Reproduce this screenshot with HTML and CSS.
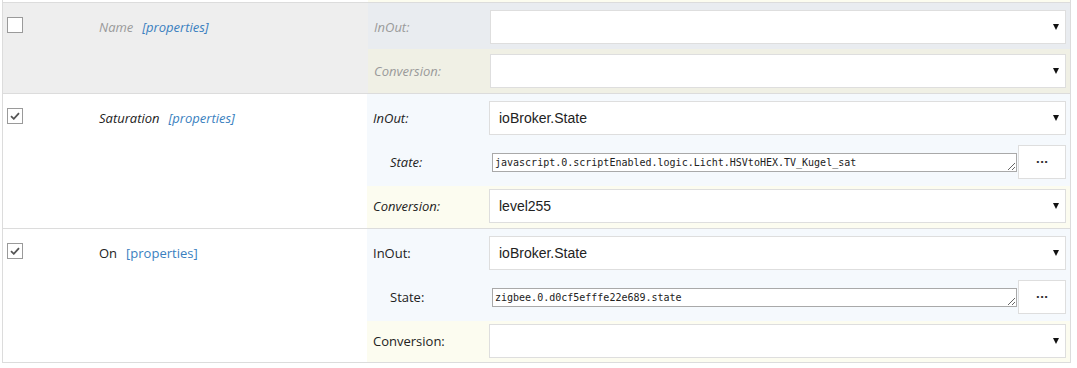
FILE: index.html
```html
<!DOCTYPE html>
<html>
<head>
<meta charset="utf-8">
<link rel="stylesheet" href="styles.css">
</head>
<body>
<div class="list">
  <div class="strip"><div class="strip-l"></div><div class="strip-r"></div></div>

  <div class="row row-off">
    <div class="left">
      <span class="chk"></span>
      <span class="name it">Name</span>
      <span class="props it">[properties]</span>
    </div>
    <div class="right">
      <div class="sub io"><div class="lab it">InOut:</div><div class="ctl"><div class="sel"><span class="val"></span><span class="arr"></span></div></div></div>
      <div class="sub conv conv-first"><div class="lab it">Conversion:</div><div class="ctl"><div class="sel"><span class="val"></span><span class="arr"></span></div></div></div>
    </div>
  </div>

  <div class="row">
    <div class="left">
      <span class="chk"><svg width="10" height="8" viewBox="0 0 10 8"><path d="M1 4.2 L3.8 6.8 L9 1.2" fill="none" stroke="#555" stroke-width="1.8"/></svg></span>
      <span class="name it">Saturation</span>
      <span class="props it">[properties]</span>
    </div>
    <div class="right">
      <div class="sub io"><div class="lab it">InOut:</div><div class="ctl"><div class="sel"><span class="val">ioBroker.State</span><span class="arr"></span></div></div></div>
      <div class="sub st"><div class="lab lab-st it">State:</div><div class="ctl ctl-st"><textarea class="ta" rows="1">javascript.0.scriptEnabled.logic.Licht.HSVtoHEX.TV_Kugel_sat</textarea><button class="btn">···</button></div></div>
      <div class="sub conv"><div class="lab it">Conversion:</div><div class="ctl"><div class="sel"><span class="val">level255</span><span class="arr"></span></div></div></div>
    </div>
  </div>

  <div class="row">
    <div class="left">
      <span class="chk"><svg width="10" height="8" viewBox="0 0 10 8"><path d="M1 4.2 L3.8 6.8 L9 1.2" fill="none" stroke="#555" stroke-width="1.8"/></svg></span>
      <span class="name">On</span>
      <span class="props">[properties]</span>
    </div>
    <div class="right">
      <div class="sub io"><div class="lab">InOut:</div><div class="ctl"><div class="sel"><span class="val">ioBroker.State</span><span class="arr"></span></div></div></div>
      <div class="sub st"><div class="lab lab-st">State:</div><div class="ctl ctl-st"><textarea class="ta" rows="1">zigbee.0.d0cf5efffe22e689.state</textarea><button class="btn">···</button></div></div>
      <div class="sub conv conv-last"><div class="lab">Conversion:</div><div class="ctl"><div class="sel"><span class="val"></span><span class="arr"></span></div></div></div>
    </div>
  </div>
</div>
</body>
</html>
```

FILE: styles.css
```css
html, body {
  margin: 0;
  padding: 0;
  background: #fff;
}
body {
  font-family: "Open Sans", "Noto Sans", sans-serif;
  font-size: 13px;
  color: #333;
}
.list {
  margin-left: 2px;
  width: 1067px;
  border-left: 1px solid #dcdcdc;
  border-right: 1px solid #dcdcdc;
}
.strip {
  display: flex;
  height: 2px;
  border-bottom: 1px solid #dcdcdc;
}
.strip-l { width: 365px; background: #fff; }
.strip-r { flex: 1; background: #fcfcef; }

.row {
  display: flex;
  border-bottom: 1px solid #dcdcdc;
}
.left {
  width: 365px;
  display: flex;
  align-items: flex-start;
  padding-left: 4px;
  box-sizing: border-box;
}
.chk {
  width: 14px;
  height: 14px;
  border: 1px solid #9a9a9a;
  background: #fff;
  margin-top: 14px;
  display: flex;
  align-items: center;
  justify-content: center;
}
.name {
  margin-left: 76px;
  line-height: 18px;
  margin-top: 15px;
  color: #222;
}
.props {
  margin-left: 9px;
  line-height: 18px;
  margin-top: 15px;
  color: #3a7fc0;
}
.it { font-style: italic; }

.right {
  flex: 1;
  display: flex;
  flex-direction: column;
}
.sub {
  display: flex;
  align-items: center;
}
.io, .st { background: #f5f9fd; }
.conv { background: #fcfcf0; }
.io { padding: 7px 0 5px; }
.st { padding: 5px 0 7px; }
.conv { padding: 3px 0 5px; }
.conv-last { padding-bottom: 4px; }
.conv-first { padding: 5px 0 5px; }

.lab {
  width: 122px;
  box-sizing: border-box;
  padding-left: 6px;
  color: #222;
}
.lab-st { padding-left: 23px; }
.ctl {
  flex: 1;
  padding-right: 4px;
  display: flex;
  align-items: center;
}
.ctl-st { padding-left: 3px; }

.sel {
  flex: 1;
  height: 34px;
  box-sizing: border-box;
  border: 1px solid #dedede;
  background: #fff;
  display: flex;
  align-items: center;
  padding: 0 6px 0 9px;
}
.val {
  flex: 1;
  font-family: "Liberation Sans", Arial, sans-serif;
  font-size: 14px;
  color: #222;
}
.arr {
  width: 0;
  height: 0;
  border-left: 3.5px solid transparent;
  border-right: 3.5px solid transparent;
  border-top: 6px solid #111;
}

.ta {
  width: 525px;
  height: 19px;
  box-sizing: border-box;
  border: 1px solid #a9a9a9;
  padding: 2px 2px 0;
  margin: 0;
  font-family: "DejaVu Sans Mono", "Liberation Mono", monospace;
  font-size: 10px;
  line-height: 14px;
  color: #222;
  overflow: hidden;
  resize: vertical;
  white-space: nowrap;
}
.btn {
  margin-left: 1px;
  width: 48px;
  height: 34px;
  border: 1px solid #dedede;
  background: #fff;
  font-family: "DejaVu Sans", sans-serif;
  font-size: 11px;
  font-weight: bold;
  color: #333;
  padding: 0;
  letter-spacing: 0;
}

.row-off { background: #eeeeee; }
.row-off .io { background: #e9ecf0; }
.row-off .conv { background: #f0f0e5; }
.row-off .name, .row-off .lab { color: #9a9a9a; }
```
